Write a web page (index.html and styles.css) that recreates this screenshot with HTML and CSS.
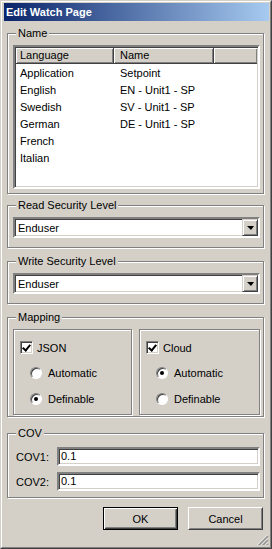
FILE: index.html
```html
<!DOCTYPE html>
<html>
<head>
<meta charset="utf-8">
<link rel="stylesheet" href="styles.css">
</head>
<body>
<div class="window">
  <div class="frame">
    <div class="titlebar"><span class="title">Edit Watch Page</span></div>
    <div class="content">
      <div class="group g-name">
        <div class="legend">Name</div>
        <div class="list sunken">
          <div class="list-head">
            <div class="hcol c1">Language</div>
            <div class="hcol c2">Name</div>
            <div class="hcol c3"></div>
          </div>
          <div class="list-body">
            <div class="row"><span class="c1">Application</span><span class="c2">Setpoint</span></div>
            <div class="row"><span class="c1">English</span><span class="c2">EN - Unit1 - SP</span></div>
            <div class="row"><span class="c1">Swedish</span><span class="c2">SV - Unit1 - SP</span></div>
            <div class="row"><span class="c1">German</span><span class="c2">DE - Unit1 - SP</span></div>
            <div class="row"><span class="c1">French</span><span class="c2"></span></div>
            <div class="row"><span class="c1">Italian</span><span class="c2"></span></div>
          </div>
        </div>
      </div>

      <div class="group g-combo g-read">
        <div class="legend">Read Security Level</div>
        <div class="combo sunken">
          <span class="combo-text">Enduser</span>
          <span class="drop raised"><span class="arrow"></span></span>
        </div>
      </div>

      <div class="group g-combo">
        <div class="legend">Write Security Level</div>
        <div class="combo sunken">
          <span class="combo-text">Enduser</span>
          <span class="drop raised"><span class="arrow"></span></span>
        </div>
      </div>

      <div class="group g-map">
        <div class="legend">Mapping</div>
        <div class="map-cols">
          <div class="subgroup sg-json">
            <div class="check-line"><span class="checkbox checked"></span><span>JSON</span></div>
            <div class="radio-line"><span class="radio"></span><span>Automatic</span></div>
            <div class="radio-line"><span class="radio on"></span><span>Definable</span></div>
          </div>
          <div class="subgroup sg-cloud">
            <div class="check-line"><span class="checkbox checked"></span><span>Cloud</span></div>
            <div class="radio-line"><span class="radio on"></span><span>Automatic</span></div>
            <div class="radio-line"><span class="radio"></span><span>Definable</span></div>
          </div>
        </div>
      </div>

      <div class="group g-cov">
        <div class="legend">COV</div>
        <div class="field-line"><span class="field-label">COV1:</span><div class="input sunken">0.1</div></div>
        <div class="field-line"><span class="field-label">COV2:</span><div class="input sunken">0.1</div></div>
      </div>

      <div class="buttons">
        <div class="btn default"><div class="btn-inner">OK</div></div>
        <div class="btn"><div class="btn-inner">Cancel</div></div>
      </div>
    </div>
    <svg class="grip" width="12" height="12" viewBox="0 0 12 12">
      <g stroke-width="1">
        <line x1="11" y1="0.5" x2="0.5" y2="11" stroke="#ffffff"/>
        <line x1="11" y1="1.5" x2="1.5" y2="11" stroke="#808080"/>
        <line x1="11" y1="2.5" x2="2.5" y2="11" stroke="#808080"/>
        <line x1="11" y1="4.5" x2="4.5" y2="11" stroke="#ffffff"/>
        <line x1="11" y1="5.5" x2="5.5" y2="11" stroke="#808080"/>
        <line x1="11" y1="6.5" x2="6.5" y2="11" stroke="#808080"/>
        <line x1="11" y1="8.5" x2="8.5" y2="11" stroke="#ffffff"/>
        <line x1="11" y1="9.5" x2="9.5" y2="11" stroke="#808080"/>
        <line x1="11" y1="10.5" x2="10.5" y2="11" stroke="#808080"/>
      </g>
    </svg>
  </div>
</div>
</body>
</html>
```

FILE: styles.css
```css
* { box-sizing: border-box; }
html, body { margin: 0; padding: 0; background: #d4d0c8; }
body {
  font-family: "Liberation Sans", Arial, sans-serif;
  font-size: 11px;
  color: #000;
}
.window {
  width: 272px;
  height: 549px;
  border: 1px solid;
  border-color: #d4d0c8 #404040 #404040 #d4d0c8;
  background: #d4d0c8;
}
.frame {
  position: relative;
  height: 100%;
  border: 1px solid;
  border-color: #ffffff #808080 #808080 #ffffff;
  padding: 1px 1px 0 2px;
}
.titlebar {
  height: 18px;
  background: linear-gradient(to right, #0a246a, #a6caf0);
  display: flex;
  align-items: center;
  padding-left: 2px;
}
.title {
  color: #fff;
  font-weight: bold;
  font-size: 11px;
}
.content {
  padding: 0 4px 0 3px;
}
.group {
  border: 1px solid #808080;
  box-shadow: inset 1px 1px 0 #fff, 1px 1px 0 #fff;
  margin-right: 1px;
  padding: 0 3px 0 5px;
}
.legend {
  width: fit-content;
  background: #d4d0c8;
  margin-left: 3px;
  padding: 0 2px;
  height: 13px;
  line-height: 13px;
  margin-top: -7px;
  margin-bottom: 5px;
}
.sunken {
  border: 2px solid;
  border-color: #808080 #fff #fff #808080;
  box-shadow: inset 1px 1px 0 #404040, inset -1px -1px 0 #d4d0c8;
  background: #fff;
}
.raised {
  background: #d4d0c8;
  border: 1px solid;
  border-color: #d4d0c8 #404040 #404040 #d4d0c8;
  box-shadow: inset 1px 1px 0 #fff, inset -1px -1px 0 #808080;
}

/* Name group */
.g-name {
  margin-top: 12px;
  height: 161px;
}
.list {
  height: 144px;
  padding: 1px 1px 0 1px;
}
.list-head {
  display: flex;
  height: 16px;
}
.hcol {
  height: 16px;
  line-height: 15px;
  background: #d4d0c8;
  border-right: 1px solid #404040;
  border-bottom: 1px solid #404040;
  box-shadow: inset 1px 1px 0 #fff, inset -1px -1px 0 #808080;
  padding-left: 6px;
}
.hcol.c1 { width: 98px; padding-left: 4px; }
.hcol.c2 { width: 100px; }
.hcol.c3 { flex: 1; border-right: none; }
.list-body { padding-top: 1px; }
.row {
  display: flex;
  height: 17px;
  line-height: 17px;
}
.row .c1 { width: 98px; padding-left: 4px; }
.row .c2 { padding-left: 6px; }

/* Combo groups */
.g-combo {
  margin-top: 13px;
  height: 43px;
}
.g-read { margin-top: 11px; }
.combo {
  height: 21px;
  display: flex;
  align-items: center;
  justify-content: space-between;
  padding-left: 2px;
}
.combo-text { padding-left: 1px; }
.drop {
  width: 16px;
  height: 17px;
  display: flex;
  align-items: center;
  justify-content: center;
}
.arrow {
  width: 0; height: 0;
  border-left: 4px solid transparent;
  border-right: 3px solid transparent;
  border-top: 4px solid #000;
  margin-left: 1px;
}

/* Mapping */
.g-map {
  margin-top: 13px;
  height: 100px;
}
.map-cols {
  display: flex;
  gap: 7px;
}
.subgroup {
  height: 86px;
  border: 1px solid #808080;
  box-shadow: inset 1px 1px 0 #fff, 1px 1px 0 #fff;
  padding: 11px 0 0 6px;
}
.sg-json { width: 119px; }
.sg-cloud { width: 121px; }
.check-line {
  display: flex;
  align-items: center;
  height: 13px;
  gap: 4px;
}
.radio-line {
  display: flex;
  align-items: center;
  height: 13px;
  margin-top: 12px;
  padding-left: 10px;
  gap: 6px;
}
.radio-line + .radio-line { margin-top: 13px; }
.checkbox {
  width: 13px; height: 13px;
  border: 1px solid;
  border-color: #808080 #fff #fff #808080;
  box-shadow: inset 1px 1px 0 #404040, inset -1px -1px 0 #d4d0c8;
  background: #fff;
  position: relative;
}
.checkbox.checked::after {
  content: "";
  position: absolute;
  left: 2px; top: 1px;
  width: 3px; height: 6px;
  border: solid #000;
  border-width: 0 2px 2px 0;
  transform: translate(1px, 0) rotate(40deg);
}
.radio {
  width: 12px; height: 12px;
  border-radius: 50%;
  background: #fff;
  border: 1px solid;
  border-color: #808080 #fff #fff #808080;
  box-shadow: inset 1px 1px 0 #404040;
  position: relative;
}
.radio.on::after {
  content: "";
  position: absolute;
  left: 3px; top: 3px;
  width: 4px; height: 4px;
  border-radius: 50%;
  background: #000;
}

/* COV */
.g-cov {
  margin-top: 16px;
  height: 65px;
  padding-left: 8px;
}
.g-cov .legend { margin-left: 0; margin-bottom: 7px; }
.field-line {
  display: flex;
  align-items: center;
  height: 19px;
  margin-bottom: 6px;
}
.field-label { width: 41px; }
.input {
  flex: 1;
  height: 19px;
  line-height: 15px;
  padding-left: 2px;
}

/* Buttons */
.buttons {
  display: flex;
  justify-content: flex-end;
  gap: 10px;
  margin-top: 9px;
  padding-right: 2px;
}
.btn {
  width: 75px;
  height: 23px;
  border: 1px solid;
  border-color: #fff #404040 #404040 #fff;
  background: #d4d0c8;
}
.btn-inner {
  height: 100%;
  border: 1px solid;
  border-color: #d4d0c8 #808080 #808080 #d4d0c8;
  display: flex;
  align-items: center;
  justify-content: center;
}
.btn.default {
  border: 1px solid #000;
  box-shadow: inset 1px 1px 0 #fff, inset -1px -1px 0 #404040;
}
.btn.default .btn-inner {
  margin: 1px;
  height: 19px;
  border-color: #d4d0c8 #808080 #808080 #d4d0c8;
}
.grip {
  position: absolute;
  right: 1px;
  bottom: 1px;
}
```
